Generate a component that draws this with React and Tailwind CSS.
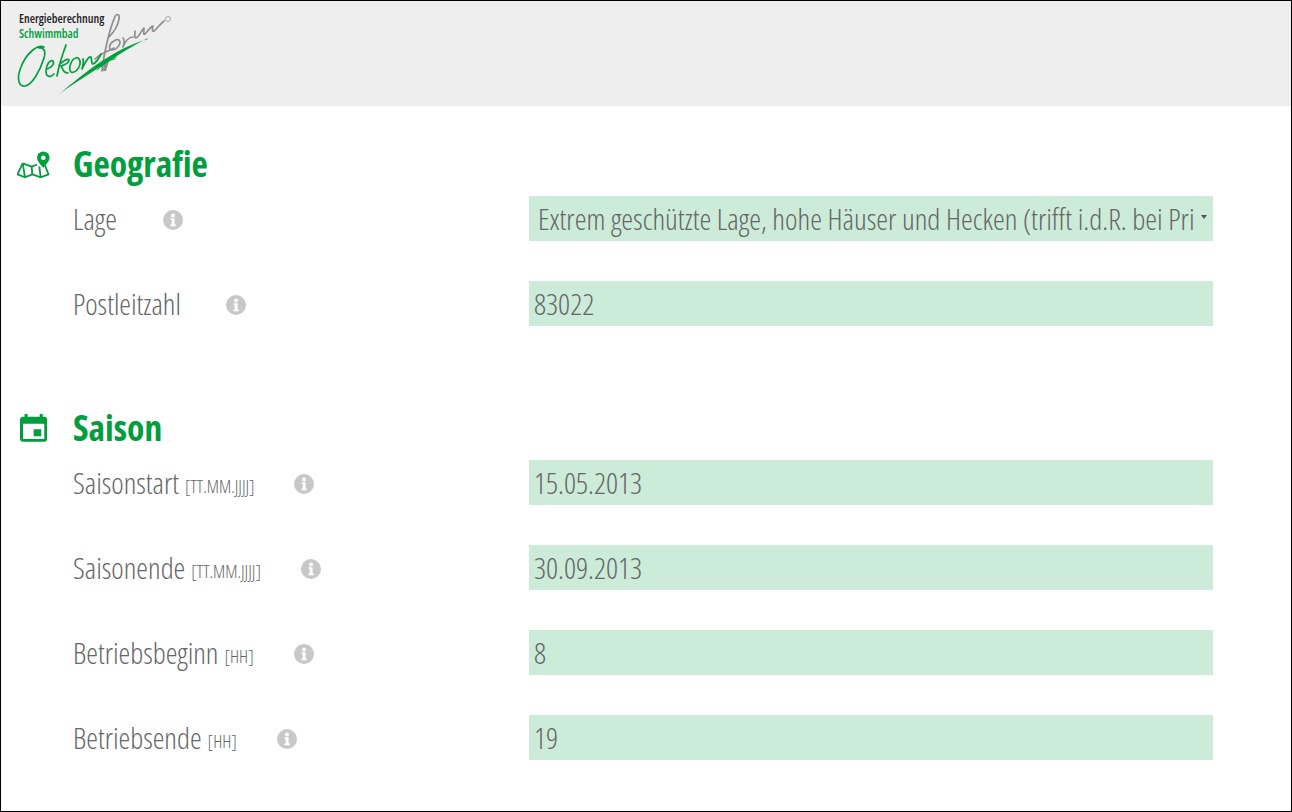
const F = '[font-family:"Open_Sans",sans-serif] [font-stretch:condensed]';

function Info() {
  return (
    <svg width="20" height="20" viewBox="0 0 20 20" className="shrink-0 block">
      <circle cx="10" cy="10" r="10" fill="#c8c8c8" />
      <circle cx="10" cy="5.4" r="2" fill="#fff" />
      <path d="M7.600 8.300h4v6.300h1.200V16.200H7.400v-1.600h1.300V9.900H7.600z" fill="#fff" />
    </svg>
  );
}

function MapIcon() {
  return (
    <svg width="34" height="28" viewBox="17 150 34 28" fill="none" stroke="#009e3d" strokeWidth="1.800" strokeLinejoin="round" className="shrink-0">
      <path d="M22.700 163.300 L17.500 174.300 L25 177.300 L32.300 174.300 L40.700 177.300 L48.500 174.300 L45 165.500" />
      <path d="M22.700 163.300 L31.700 166.700 L37 164.500 M22.700 163.300 L25 177.300 M31.700 166.700 L32.300 174.300 M39.300 166.500 L40.700 177.300" />
      <path d="M43.300 151.500a6.300 6.300 0 0 0-6.300 6.300c0 3.800 6.300 10 6.300 10s6.300-6.200 6.300-10a6.300 6.300 0 0 0-6.300-6.300z" fill="#009e3d" stroke="none" />
      <circle cx="43.300" cy="157.800" r="2.300" fill="#fff" stroke="none" />
    </svg>
  );
}

function CalIcon() {
  return (
    <svg width="27.3" height="27.7" viewBox="3 1 18 20" preserveAspectRatio="none" className="shrink-0">
      <path fill="#009e3d" d="M17 12h-5v5h5v-5zM16 1v2H8V1H6v2H5c-1.110 0-1.990.9-1.990 2L3 19c0 1.100.89 2 2 2h14c1.100 0 2-.9 2-2V5c0-1.100-.9-2-2-2h-1V1h-2zm3 18H5V8h14v11z" />
    </svg>
  );
}

function Logo() {
  return (
    <div className="relative w-[172px] h-[100px]">
      <svg width="172" height="100" viewBox="0 0 172 100" fill="none" className="absolute left-0 top-0">
        <g stroke="#8e8e8e" strokeWidth="1.700" strokeLinecap="round" strokeLinejoin="round">
          <path d="M101 70 C103 50 109 28 113 18 C115 12 119 12 118 18 C117 25 112 32 108 36" />
          <path d="M94 58 C100 52 108 50 113 47" />
          <path d="M113 40 C108 42 107 49 111 49 C116 49 121 42 118 39 C116 38 114 39 113 40" />
          <path d="M122 37 C124 39 123 43 122 46 C124 41 127 36 132 36" />
          <path d="M134 30 C134 34 133 37 135 37 C138 36 140 30 143 27 C143 31 142 34 144 33 C147 30 149 26 152 25 C151 28 151 31 153 30 C156 28 159 23 163 20" />
        </g>
        <path d="M102 70 L103 59 L108 60 L105 70z" fill="#8e8e8e" />
        <circle cx="167" cy="18" r="2.500" stroke="#a0a0a0" strokeWidth="0.900" />
        <g stroke="#00a03c" strokeWidth="1.700" strokeLinecap="round" strokeLinejoin="round">
          <path d="M43 46 C36 43 25 53 20 66 C15 78 18 86 24 85 C31 84 39 70 43 57 C45 50 43 46 38 47" />
          <path d="M46 68 C50 67 54 63 52 60 C49 58 45 64 45 70 C45 76 49 77 53 73" />
          <path d="M65 44 C62 52 58 64 56 75 M58 64 C62 60 67 57 68 59 C68 63 62 64 60 65 C62 69 63 72 67 72" />
          <path d="M75 57 C70 58 67 68 70 71 C74 73 80 66 79 60 C78 57 76 56 75 57" />
          <path d="M82 58 C83 60 82 64 81 68 C84 62 87 55 90 56 C91 59 90 63 92 63 C95 62 98 57 100 53" />
          <path d="M96 69 C102 63 108 59 115 56 M100 66 C106 60 110 59 114 58" strokeWidth="1" />
        </g>
        <path d="M56 95 C70 84 90 72 105 62 C120 52 135 43 147 37 L146 38.500 C135 41 120 48 104 58 C88 68 70 83 56 95z" fill="#00a03c" />
      </svg>
      <div className={`absolute left-[18px] top-[11px] text-[12px] leading-[13px] font-semibold text-[#222] ${F}`}>Energieberechnung</div>
      <div className={`absolute left-[18px] top-[26px] text-[12px] leading-[13px] font-semibold text-[#00a03c] ${F}`}>Schwimmbad</div>
    </div>
  );
}

function Row({ label, unit, gap, children }) {
  return (
    <div className="flex items-center h-[45px] pl-[72px] pr-[78px]">
      <div className={`flex items-center w-[456px] text-[#666] ${F}`}>
        <span className="text-[29.6px] font-light leading-none">{label}</span>
        {unit && <span className="text-[18px] font-light ml-[6px] mt-[7px] leading-none">[{unit}]</span>}
        <span className="mt-[2px]" style={{ marginLeft: gap }}><Info /></span>
      </div>
      {children}
    </div>
  );
}

function Field({ value }) {
  return (
    <div className={`w-[684px] h-[45px] bg-[#ccebd8] pl-[5px] pt-[2px] flex items-center text-[29.6px] font-light text-[#666] ${F}`}>{value}</div>
  );
}

function Heading({ icon, children, className }) {
  return (
    <div className={`flex items-center ${className}`}>
      <div className="w-[72px] flex items-center">{icon}</div>
      <h2 className={`text-[35.6px] leading-none font-bold text-[#009e3d] ${F}`}>{children}</h2>
    </div>
  );
}

export default function App() {
  return (
    <div className="w-[1292px] h-[812px] border border-black bg-white overflow-hidden">
      <header className="h-[105px] bg-[#eeeeee]"><Logo /></header>
      <Heading icon={<span className="pl-[16px] block"><MapIcon /></span>} className="mt-[41px] h-[34px]">Geografie</Heading>
      <div className="mt-[15px] flex flex-col gap-[40px]">
        <Row label="Lage" gap={46}>
          <div className={`relative w-[684px] h-[45px] bg-[#ccebd8] pl-[9px] pr-[19px] pt-[2px] flex items-center text-[29.8px] font-light text-[#666] ${F}`}>
            <span className="whitespace-nowrap overflow-hidden">Extrem geschützte Lage, hohe Häuser und Hecken (trifft i.d.R. bei Privatgärten zu)</span>
            <span className="absolute right-[6px] top-[19px] w-0 h-0 border-l-[3px] border-r-[3px] border-t-[4px] border-l-transparent border-r-transparent border-t-[#555]"></span>
          </div>
        </Row>
        <Row label="Postleitzahl" gap={45}><Field value="83022" /></Row>
      </div>
      <Heading icon={<span className="pl-[19px] block"><CalIcon /></span>} className="mt-[85px] h-[34px]">Saison</Heading>
      <div className="mt-[15px] flex flex-col gap-[40px]">
        <Row label="Saisonstart" unit="TT.MM.JJJJ" gap={39}><Field value="15.05.2013" /></Row>
        <Row label="Saisonende" unit="TT.MM.JJJJ" gap={40}><Field value="30.09.2013" /></Row>
        <Row label="Betriebsbeginn" unit="HH" gap={40}><Field value="8" /></Row>
        <Row label="Betriebsende" unit="HH" gap={40}><Field value="19" /></Row>
      </div>
    </div>
  );
}
